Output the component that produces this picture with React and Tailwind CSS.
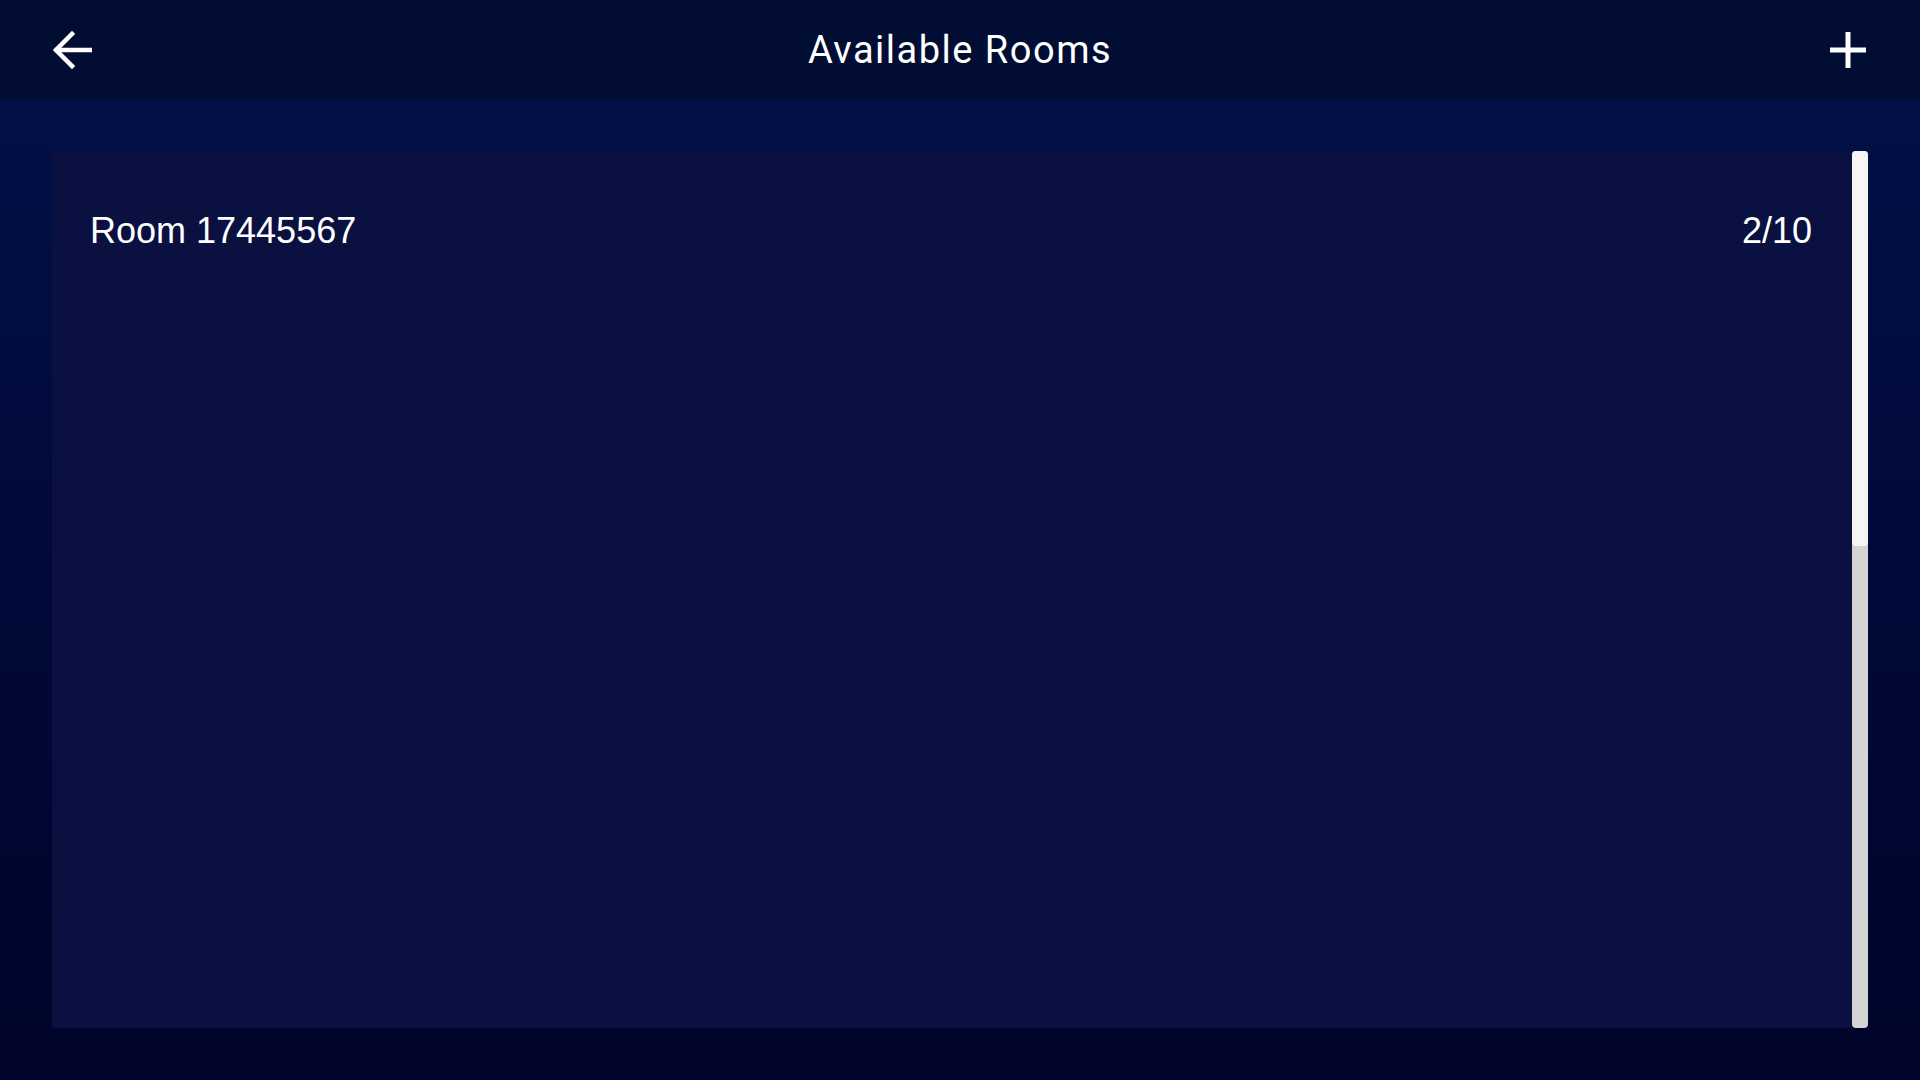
export default function App() {
  const rooms = [{ id: "17445567", players: 2, max: 10 }];

  return (
    <div className="w-[1920px] h-[1080px] flex flex-col bg-gradient-to-b from-[#021149] to-[#00042a] overflow-hidden">
      {/* top bar */}
      <header className="h-[100px] shrink-0 flex items-center justify-between px-[52px] bg-[#010d33] rounded-b-md">
        <button className="w-[40px] h-[40px] flex items-center justify-center text-white">
          <svg width="40" height="40" viewBox="0 0 40 40" fill="none" stroke="currentColor" strokeWidth="4.5" strokeLinecap="square">
            <path d="M38 20H5" />
            <path d="M20 4 4 20l16 16" />
          </svg>
        </button>
        <h1 className="text-white text-[38px] tracking-[1.5px] font-['Roboto',sans-serif]">
          Available Rooms
        </h1>
        <button className="w-[40px] h-[40px] flex items-center justify-center text-white">
          <svg width="36" height="36" viewBox="0 0 36 36" fill="none" stroke="currentColor" strokeWidth="5">
            <path d="M18 0v36" />
            <path d="M0 18h36" />
          </svg>
        </button>
      </header>

      <main className="flex-1 flex pt-[51px] pb-[52px] px-[52px]">
        <div className="flex-1 bg-[#0a1040] rounded-l-sm">
          {rooms.map((room) => (
            <div
              key={room.id}
              className="flex items-center justify-between pl-[38px] pr-[40px] pt-[53px] text-white text-[36px] font-['Liberation_Sans',Arial,sans-serif]"
            >
              <span>Room {room.id}</span>
              <span>
                {room.players}/{room.max}
              </span>
            </div>
          ))}
        </div>
        <div className="w-[16px] bg-[#d4d4d4] rounded-[4px] flex flex-col">
          <div className="h-[395px] bg-[#f5f5f5] rounded-[4px]" />
        </div>
      </main>
    </div>
  );
}
